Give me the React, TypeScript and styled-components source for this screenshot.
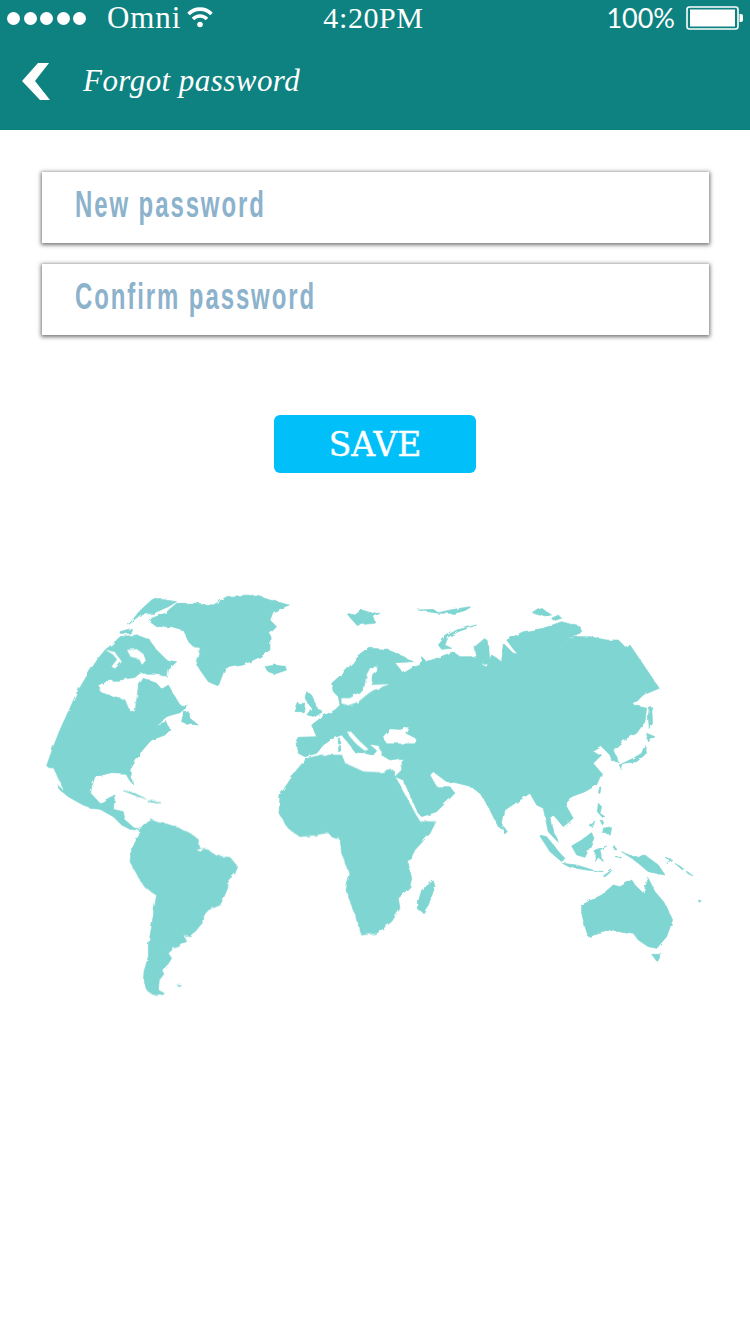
import styled, { createGlobalStyle } from "styled-components";

const GlobalStyle = createGlobalStyle`
  html, body {
    margin: 0;
    padding: 0;
    background: #fff;
  }
`;

const Page = styled.div`
  width: 750px;
  height: 1333px;
  overflow: hidden;
  background: #fff;
`;

const Header = styled.header`
  height: 130px;
  background: #0e8280;
  color: #fff;
`;

const StatusBar = styled.div`
  display: grid;
  grid-template-columns: 1fr auto 1fr;
  align-items: center;
  height: 36px;
  padding: 0 7px;
`;

const Carrier = styled.div`
  display: flex;
  align-items: center;
`;

const Dots = styled.div`
  display: flex;
  gap: 3.5px;
  margin-right: 21px;
`;

const Dot = styled.span`
  width: 13px;
  height: 13px;
  border-radius: 50%;
  background: #fff;
`;

const StatusText = styled.span`
  font-family: "Liberation Serif", serif;
  font-size: 31px;
  line-height: 34px;
  letter-spacing: 0.9px;
`;

const WifiIcon = styled.svg`
  width: 26px;
  height: 22px;
  margin-left: 6px;
  margin-top: -3px;
`;

const Time = styled(StatusText)`
  font-size: 30px;
  letter-spacing: 0.6px;
  margin-left: -3px;
`;

const Battery = styled.div`
  display: flex;
  align-items: center;
  justify-content: flex-end;
  gap: 11px;
`;

const Percent = styled.span`
  font-family: Lato, sans-serif;
  font-size: 27px;
  line-height: 34px;
`;

const BatteryIcon = styled.svg`
  width: 57px;
  height: 24px;
`;

const NavRow = styled.div`
  display: flex;
  align-items: center;
  height: 90px;
  padding-left: 22px;
  gap: 32px;
`;

const BackIcon = styled.svg`
  width: 29px;
  height: 39px;
`;

const Title = styled.h1`
  margin: 0;
  font-family: "Liberation Serif", serif;
  font-size: 31px;
  font-style: italic;
  font-weight: 400;
  letter-spacing: 0.45px;
`;

const Form = styled.main`
  display: flex;
  flex-direction: column;
  gap: 21px;
  padding: 42px 41px 0 42px;
`;

const Field = styled.div`
  display: flex;
  align-items: center;
  height: 71px;
  padding: 0 0 5px 33px;
  box-sizing: border-box;
  background: #fff;
  box-shadow: 0 1px 4px 1px rgba(30, 30, 30, 0.62);
`;

const Placeholder = styled.span`
  font-family: "Liberation Sans Narrow", "Liberation Sans", sans-serif;
  font-size: 36px;
  font-weight: 700;
  letter-spacing: 2.9px;
  color: #8cb2cc;
  transform: scaleX(0.665);
  transform-origin: left center;
  white-space: nowrap;
`;

const SaveRow = styled.div`
  display: flex;
  justify-content: center;
  margin-top: 80px;
`;

const SaveButton = styled.button`
  width: 202px;
  height: 58px;
  border: 0;
  border-radius: 6px;
  background: #00bff9;
  color: #fff;
  font-family: "DejaVu Serif", serif;
  font-size: 33px;
  -webkit-text-stroke: 0.4px #fff;
  padding: 0;
`;

const MapWrap = styled.div`
  display: flex;
  margin: 117px 0 0 40px;
`;

const MapSvg = styled.svg`
  width: 670px;
  height: 410px;
`;

const Land = styled.polygon`
  fill: #7fd5d2;
  stroke: #7fd5d2;
  stroke-width: 2;
  stroke-linejoin: round;
`;

const Sea = styled.polygon`
  fill: #fff;
  stroke: #fff;
  stroke-width: 1;
  stroke-linejoin: round;
`;

type Frame = { x: number; y: number; land: string[]; sea?: string[] };

// traced in 3x crop coordinates, each frame has its own origin on the page
const frames: Frame[] = [
  {
    x: 0,
    y: 0,
    land: [
      // north america with the arctic islands
      "20,527 40,470 60,420 85,365 110,310 132,272 155,235 175,205 197,178 215,165 240,140 290,135 330,150 345,175 380,210 410,215 385,240 382,262 345,250 300,250 285,262 240,270 205,272 175,285 180,305 215,320 255,330 268,362 285,365 290,330 295,290 310,265 350,280 365,298 385,285 405,320 420,345 445,348 420,368 385,378 345,405 380,395 390,420 375,435 335,450 318,468 300,490 285,515 270,540 278,582 262,560 255,550 215,548 165,560 155,590 152,610 180,640 205,625 225,615 220,658 250,665 255,690 280,712 298,720 270,718 245,705 220,680 180,658 150,655 120,640 85,620 60,600 35,540",
      "430,368 445,365 450,385 475,405 445,402 425,395",
      "345,25 410,35 385,50 340,70 300,75 265,105 300,62 335,30",
      "240,125 275,115 270,130 240,130",
      // greenland
      "335,85 375,70 410,40 470,40 520,45 560,20 620,15 660,20 690,30 748,45 700,65 690,90 710,110 690,130 690,180 660,200 610,225 555,235 535,288 505,275 470,225 480,190 450,160 430,120 395,110 350,110 330,95",
      // iceland, britain, ireland
      "675,230 705,225 740,230 740,240 705,252 685,245",
      "800,305 815,315 835,360 848,365 825,380 800,375 815,355 795,325",
      "765,365 775,340 795,340 790,365",
      // svalbard
      "920,70 945,75 965,60 1000,70 1020,70 1000,80 1005,100 950,105",
      // corsica, sardinia
      "895,445 902,445 902,462 895,462",
      "893,467 902,467 902,482 893,482",
    ],
    sea: [
      // baja
      "25,535 40,535 70,600 50,580",
      // baltic
      "992,232 1012,230 1010,245 995,262 995,285 1045,283 1000,300 985,310 955,335 925,345 905,340 905,325 930,325 962,305 975,285 980,255",
      // adriatic
      "922,425 935,428 960,455 985,478 975,482 950,462 930,440",
      // greenland and arctic channels
      "450,170 480,175 470,195 455,190",
      "198,180 225,187 245,215 225,235 215,230 232,208 218,192",
      "262,180 290,178 310,192 318,215 305,222 295,205 272,200",
    ],
  },
  {
    // eurasia, europe side is in negative x
    x: 990,
    y: 0,
    land: [
      "-220,450 -215,490 -195,500 -160,490 -140,465 -110,445 -85,435 -60,465 -42,490 -30,485 -5,490 10,495 20,482 0,465 30,470 35,495 60,510 97,505 95,540 75,560 100,570 145,670 155,680 200,665 255,610 240,590 200,590 180,555 190,545 230,575 245,575 305,590 335,615 355,650 385,710 395,715 405,660 450,630 480,610 500,645 520,655 535,725 568,760 545,710 540,680 555,680 580,710 610,685 590,650 590,630 610,618 645,605 680,585 695,550 670,520 695,495 668,485 695,470 720,495 728,515 745,515 730,480 745,465 770,445 800,430 825,395 830,355 790,345 820,315 868,295 780,165 770,175 745,150 710,150 660,140 620,140 585,155 635,125 630,110 575,95 520,115 460,125 410,150 440,190 425,185 400,160 395,215 365,195 350,230 335,225 360,220 355,155 345,145 315,170 320,200 270,200 250,185 200,205 170,215 155,200 150,225 125,235 100,250 75,218 130,215 90,195 50,178 0,175 -5,178 -40,205 -70,240 -115,280 -110,305 -95,320 -90,345 -105,360 -140,378 -175,405 -160,440 -215,442",
      // novaya zemlya, franz josef, new siberian
      "320,105 260,120 225,140 205,165 215,178 245,175 225,165 235,140 265,125",
      "145,60 190,58 205,68 240,60 300,50 300,58 255,70 205,70 180,66",
      "490,70 515,55 545,75 520,78",
      "545,85 565,75 575,85 552,92",
      // sakhalin, japan
      "838,350 845,350 848,400 838,415 835,380",
      "830,430 855,440 835,455",
      "825,465 830,490 800,515 760,520 755,540 748,525 790,505 815,490",
      "685,610 690,590 693,592 690,610",
    ],
    sea: [
      // black sea
      "40,440 60,418 90,420 115,412 105,430 135,445 135,460 90,460 50,460",
    ],
  },
  {
    // africa and south america
    x: 120,
    y: 540,
    land: [
      "178,180 190,165 215,150 235,158 260,162 300,175 330,190 352,205 360,235 385,240 410,258 450,262 473,290 465,310 445,330 443,355 430,385 420,405 385,420 372,435 370,455 345,485 330,497 310,495 318,515 300,528 280,535 265,550 275,565 262,585 245,600 252,612 238,630 235,660 255,672 232,678 205,665 190,635 192,605 205,560 205,525 215,470 222,420 230,375 195,352 175,320 150,275 155,235 178,195",
      "680,-35 725,-45 785,-45 795,-20 850,5 900,8 940,0 945,20 960,45 1005,130 1020,155 1068,155 1050,190 1005,240 985,280 995,325 990,350 955,385 960,415 935,455 890,490 845,495 820,420 798,360 810,310 785,250 780,205 760,205 745,188 705,195 660,200 625,175 597,130 600,75 650,0",
      // cuba, hispaniola, falklands
      "130,62 160,68 195,85 170,78",
      "200,92 240,95 215,97",
      "290,645 308,648 298,650",
    ],
    sea: ["350,240 375,235 365,245"],
  },
  {
    // indian ocean and oceania
    x: 1080,
    y: 540,
    land: [
      // madagascar
      "100,332 105,350 85,405 70,428 55,420 55,395 65,360",
      // australia, tasmania
      "545,405 605,375 640,345 660,350 695,330 705,345 730,370 745,325 765,365 795,400 818,450 800,500 770,535 745,530 715,510 700,490 640,480 600,490 565,500 555,470 545,430",
      "755,553 785,553 772,575",
      // sri lanka, sumatra, java
      "310,168 322,185 312,192",
      "418,195 440,200 480,250 495,265 485,275 450,245",
      "487,280 530,285 585,302 610,305 560,300 510,292",
      "610,318 635,300 630,308 615,320",
      // borneo, sulawesi, new guinea
      "515,228 545,210 575,188 582,205 570,230 555,262 530,255",
      "585,240 620,228 600,240 610,275 595,262 585,275",
      "665,245 700,260 735,255 775,285 795,315 745,305 715,280 695,265",
      // philippines
      "595,100 605,110 600,130 615,140 610,145 592,125",
      "610,175 632,170 628,192 608,190",
      "600,150 612,155 608,165",
      "570,170 585,152 578,172",
      // small islands
      "795,262 815,268 800,282 810,270",
      "825,280 850,295 848,300",
      "860,305 880,318 865,312",
      "645,262 665,262 660,265",
      "645,225 650,240 642,238",
      "895,390 904,393 898,397",
    ],
  },
];

const Map = () => (
  <MapSvg viewBox="40 590 670 410">
    <defs>
      <filter id="coast" x="-2%" y="-2%" width="104%" height="104%">
        <feTurbulence type="fractalNoise" baseFrequency="0.14" numOctaves="2" seed="4" />
        <feDisplacementMap in="SourceGraphic" scale="3.5" />
        <feGaussianBlur stdDeviation="0.45" />
      </filter>
    </defs>
    <g filter="url(#coast)">
      <g transform="translate(40 590) scale(0.3333)">
        {frames.map((frame) => (
          <g key={`${frame.x}_${frame.y}`} transform={`translate(${frame.x} ${frame.y})`}>
            {frame.land.map((points) => (
              <Land key={points} points={points} />
            ))}
          </g>
        ))}
        {frames.map((frame) => (
          <g key={`sea_${frame.x}_${frame.y}`} transform={`translate(${frame.x} ${frame.y})`}>
            {(frame.sea || []).map((points) => (
              <Sea key={points} points={points} />
            ))}
          </g>
        ))}
      </g>
    </g>
  </MapSvg>
);

export default function App() {
  return (
    <Page>
      <GlobalStyle />
      <Header>
        <StatusBar>
          <Carrier>
            <Dots>
              <Dot />
              <Dot />
              <Dot />
              <Dot />
              <Dot />
            </Dots>
            <StatusText>Omni</StatusText>
            <WifiIcon viewBox="0 0 26 22" fill="none" stroke="#fff" strokeWidth="3.6">
              <path d="M1.5 8 C8 1.5 18 1.5 24.5 8" />
              <path d="M6 13 C10 9 16 9 20 13" />
              <circle cx="13" cy="18.5" r="2.8" fill="#fff" stroke="none" />
            </WifiIcon>
          </Carrier>
          <Time>4:20PM</Time>
          <Battery>
            <Percent>100%</Percent>
            <BatteryIcon viewBox="0 0 57 24">
              <rect x="1" y="1" width="51" height="22" rx="2.5" fill="none" stroke="#fff" strokeWidth="1.6" />
              <rect x="4" y="3.5" width="45" height="17" fill="#fff" />
              <path d="M53.5 8 h1.5 a2 2 0 0 1 2 2 v4 a2 2 0 0 1 -2 2 h-1.5 z" fill="#fff" />
            </BatteryIcon>
          </Battery>
        </StatusBar>
        <NavRow>
          <BackIcon viewBox="0 0 29 39">
            <polygon points="27,1 16,1 0,19 18,38 28,38 13,19" fill="#fff" />
          </BackIcon>
          <Title>Forgot password</Title>
        </NavRow>
      </Header>
      <Form>
        <Field>
          <Placeholder>New password</Placeholder>
        </Field>
        <Field>
          <Placeholder>Confirm password</Placeholder>
        </Field>
      </Form>
      <SaveRow>
        <SaveButton>SAVE</SaveButton>
      </SaveRow>
      <MapWrap>
        <Map />
      </MapWrap>
    </Page>
  );
}
